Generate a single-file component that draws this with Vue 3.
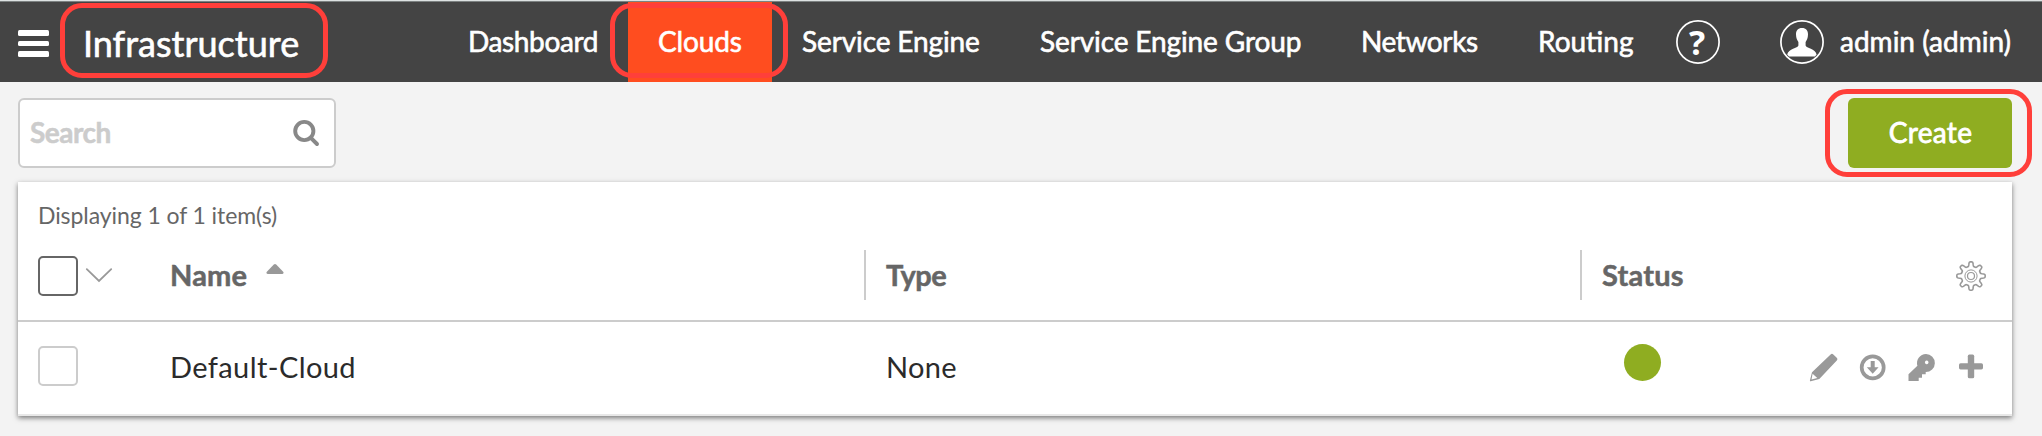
<script setup>
const navItems = [
  { label: 'Dashboard', cls: 'w-dashboard' },
  { label: 'Clouds', cls: 'w-clouds active' },
  { label: 'Service Engine', cls: 'w-se' },
  { label: 'Service Engine Group', cls: 'w-seg' },
  { label: 'Networks', cls: 'w-networks' },
  { label: 'Routing', cls: 'w-routing' }
]

// Outline of the eight-toothed settings gear
const points = []
for (let i = 0; i < 160; i++) {
  const a = (i / 160) * Math.PI * 2
  const r = 12 + 2.3 * Math.tanh(2.2 * Math.cos(8 * a) - 0.3)
  points.push(`${(15 + r * Math.cos(a)).toFixed(2)} ${(15 + r * Math.sin(a)).toFixed(2)}`)
}
const gearPath = `M${points.join('L')}Z`
</script>

<template>
  <div class="page">
    <header class="topbar">
      <div class="burger"><i></i><i></i><i></i></div>
      <div class="title">Infrastructure</div>
      <nav class="nav">
        <a v-for="item in navItems" :key="item.label" class="nav-item" :class="item.cls">{{ item.label }}</a>
      </nav>
      <svg class="help" width="44" height="44" viewBox="0 0 44 44">
        <circle cx="22" cy="22" r="21.1" fill="none" stroke="#fff" stroke-width="1.7" />
        <text x="21" y="34.5" text-anchor="middle" class="help-mark">?</text>
      </svg>
      <svg class="avatar" width="44" height="44" viewBox="0 0 44 44">
        <circle cx="22" cy="22" r="21.1" fill="none" stroke="#fff" stroke-width="1.7" />
        <path d="M22 8C26 8 28.1 10.6 28 14.5C27.9 18 26.8 20.2 25.6 22V25.5C26.2 28.5 35.5 28.3 36.6 34.5L35 36.4H9L7.2 34.5C8.5 28.3 17.8 28.5 18.4 25.5V22C17.2 20.2 16.1 18 16 14.5C15.9 10.6 18 8 22 8Z" fill="#fff" />
      </svg>
      <div class="user">admin (admin)</div>
    </header>

    <section class="toolbar">
      <div class="search">
        <span>Search</span>
        <svg width="28" height="28" viewBox="0 0 28 28" fill="none" stroke="#888" stroke-width="3.9">
          <circle cx="12.3" cy="12" r="9.1" />
          <path d="M18.6 18.6L25 25" stroke-linecap="round" />
        </svg>
      </div>
      <button class="create">Create</button>
    </section>

    <section class="card">
      <div class="count">Displaying 1 of 1 item(s)</div>
      <div class="row head">
        <div class="cell select">
          <span class="box dark"></span>
          <svg width="28" height="18" viewBox="0 0 28 18" fill="none" stroke="#999" stroke-width="1.8" stroke-linecap="round">
            <path d="M1.8 2.2L14 14L26.2 2.2" />
          </svg>
        </div>
        <div class="cell name"><span class="t-name">Name</span>
          <svg class="sort" width="18" height="10" viewBox="0 0 18 10"><path d="M7.8 .6Q9 -.4 10.2 .6L17.4 8Q18 10 16 10H2Q0 10 .6 8Z" fill="#999" /></svg>
        </div>
        <div class="cell type divided"><span class="t-type">Type</span></div>
        <div class="cell status divided"><span class="t-status">Status</span></div>
        <div class="cell tools">
          <svg width="30" height="30" viewBox="0 0 30 30" fill="none" stroke="#999">
            <path :d="gearPath" stroke-width="1.6" />
            <circle cx="15" cy="15" r="6.1" stroke-width="1" />
            <circle cx="15" cy="15" r="3.5" stroke-width="1.2" />
          </svg>
        </div>
      </div>
      <div class="row body">
        <div class="cell select"><span class="box"></span></div>
        <div class="cell name"><span class="t-cloud">Default-Cloud</span></div>
        <div class="cell type"><span class="t-none">None</span></div>
        <div class="cell status"><span class="dot"></span></div>
        <div class="cell tools">
          <svg width="30" height="30" viewBox="0 0 30 30">
            <path fill-rule="evenodd" d="M3 20.3L21.6 2.4Q23 1.2 24.3 2.4L28 5.9Q29 7.2 27.8 8.5L10.3 27L1.8 29.3Q.8 29.4 .9 28.4ZM3.6 21.7L2.5 27.6L8.3 26Z" fill="#999" />
          </svg>
          <svg width="30" height="30" viewBox="0 0 30 30">
            <circle cx="14.7" cy="15.4" r="11" fill="none" stroke="#999" stroke-width="3.7" />
            <path d="M12.7 9H16.7V15.2H20.6L14.7 21.7L8.8 15.2H12.7Z" fill="#999" />
          </svg>
          <svg width="30" height="30" viewBox="0 0 30 30">
            <path fill-rule="evenodd" d="M19 2A9 9 0 1 1 18.7 20V22.2H15V25.7H11.7V29H1.5V22.3L10.4 13.7A9 9 0 0 1 19 2ZM19.7 8.6A1.8 1.8 0 1 0 19.71 8.6Z" fill="#999" />
          </svg>
          <svg width="30" height="30" viewBox="0 0 30 30" fill="#999">
            <rect x="3" y="11.2" width="24" height="6.2" rx="1.6" />
            <rect x="11.8" y="2.6" width="6.4" height="23.7" rx="1.6" />
          </svg>
        </div>
      </div>
    </section>

    <div class="mark mark-title"></div>
    <div class="mark mark-tab"></div>
    <div class="mark mark-create"></div>
  </div>
</template>

<style>
body { margin: 0; background: #f3f3f3; }
</style>

<style scoped>
.page {
  position: relative;
  width: 2042px;
  height: 436px;
  overflow: hidden;
  background: #f3f3f3;
  font-family: Lato, "Open Sans", sans-serif;
  font-size: 28px;
  box-sizing: border-box;
}
svg { display: block; flex: none; }
.topbar {
  display: flex;
  align-items: center;
  height: 80px;
  border-top: 1px solid #dde2e2;
  background: linear-gradient(#7c8181 1px, #444 1px);
  padding-top: 1px;
  color: #fff;
  white-space: nowrap;
  -webkit-text-stroke: 0.6px currentColor;
}
.burger { width: 31px; margin-left: 18px; padding-top: 3px; display: grid; gap: 5px; }
.burger i { display: block; height: 5.4px; border-radius: 1.5px; background: #fff; }
.title { width: 355px; margin-left: 34px; font-size: 36px; padding-top: 1px; letter-spacing: 0; }
.nav { display: flex; height: 80px; }
.nav-item { box-sizing: border-box; padding-left: 30px; line-height: 79px; }
.w-dashboard { width: 190px; letter-spacing: -0.37px; }
.w-clouds { width: 144px; letter-spacing: -0.14px; }
.w-se { width: 238px; letter-spacing: -0.12px; }
.w-seg { width: 321px; letter-spacing: -0.12px; }
.w-networks { width: 177px; letter-spacing: -0.4px; }
.w-routing { width: 155px; }
.active { background: #ff4d1f; }
.help { margin-left: 13px; }
.help-mark { font: 700 34px "Open Sans", sans-serif; fill: #fff; stroke: none; -webkit-text-stroke: 0; }
.help, .avatar { margin-bottom: 0; }
.avatar { margin-left: 60px; }
.user { margin-left: 16px; line-height: 78px; padding-bottom: 2px; }
.toolbar {
  display: flex;
  justify-content: space-between;
  padding: 16px 30px 14px 18px;
}
.search {
  box-sizing: border-box;
  width: 318px;
  height: 70px;
  display: flex;
  align-items: center;
  justify-content: space-between;
  padding: 0 14px 0 10px;
  border: 2px solid #ccc;
  border-radius: 6px;
  background: #fff;
  color: #ccc;
}
.search span { font-weight: 700; letter-spacing: -0.5px; padding-bottom: 3px; -webkit-text-stroke: 0.5px currentColor; }
.create {
  width: 164px;
  height: 70px;
  padding: 0 0 3px 1px;
  border: 0;
  border-radius: 6px;
  background: #8fad21;
  color: #fff;
  font: inherit;
  letter-spacing: 0.35px;
  -webkit-text-stroke: 0.8px currentColor;
}
.card {
  margin: 0 30px 0 18px;
  height: 234px;
  background: #fff;
  box-shadow: 0 2px 5px rgba(0, 0, 0, 0.5);
  white-space: nowrap;
}
.count {
  height: 50px;
  line-height: 66px;
  padding-left: 20px;
  font-size: 23px;
  letter-spacing: -0.08px;
  color: #666;
  box-sizing: border-box;
}
.row { display: grid; grid-template-columns: 152px 694px 716px 1fr auto; align-items: center; box-sizing: border-box; }
.head { height: 90px; border-bottom: 2px solid #ccc; font-size: 29px; font-weight: 700; color: #666; -webkit-text-stroke: 0.5px currentColor; }
.body { height: 94px; border-bottom: 2px solid #e8e8e8; font-size: 29px; color: #2b2b2b; }
.cell { display: flex; align-items: center; }
.select { padding-left: 20px; gap: 7px; }
.box { box-sizing: border-box; width: 40px; height: 40px; border: 2px solid #ccc; border-radius: 5px; }
.box.dark { border-color: #666; }
.body .select { padding-bottom: 4px; }
.name span { padding-bottom: 3px; }
.type, .status { box-sizing: border-box; height: 50px; padding-left: 22px; }
.type span { padding-bottom: 3px; }
.status { padding-left: 23px; }
.divided { border-left: 2px solid #ccc; padding-left: 20px; margin-bottom: 2px; }
.divided span { padding-bottom: 1px; }
.sort { margin: 0 0 14px 19px; }
.t-name { letter-spacing: 0.2px; }
.t-type { letter-spacing: -0.5px; }
.t-status { letter-spacing: 0.2px; }
.t-cloud { letter-spacing: 0.4px; }
.t-none { letter-spacing: 0.3px; }
.tools { gap: 19px; padding-right: 26px; }
.body .tools { padding-bottom: 2px; }
.dot { width: 37px; height: 37px; margin: 0 0 11px 21px; border-radius: 50%; background: #8fad21; }
.mark { position: absolute; box-sizing: border-box; border: 5px solid #ff3f3a; border-radius: 22px; }
.mark-title { left: 60px; top: 3px; width: 268px; height: 75px; }
.mark-tab { left: 610px; top: 3px; width: 178px; height: 75px; }
.mark-create { left: 1825px; top: 89px; width: 207px; height: 88px; }
</style>
